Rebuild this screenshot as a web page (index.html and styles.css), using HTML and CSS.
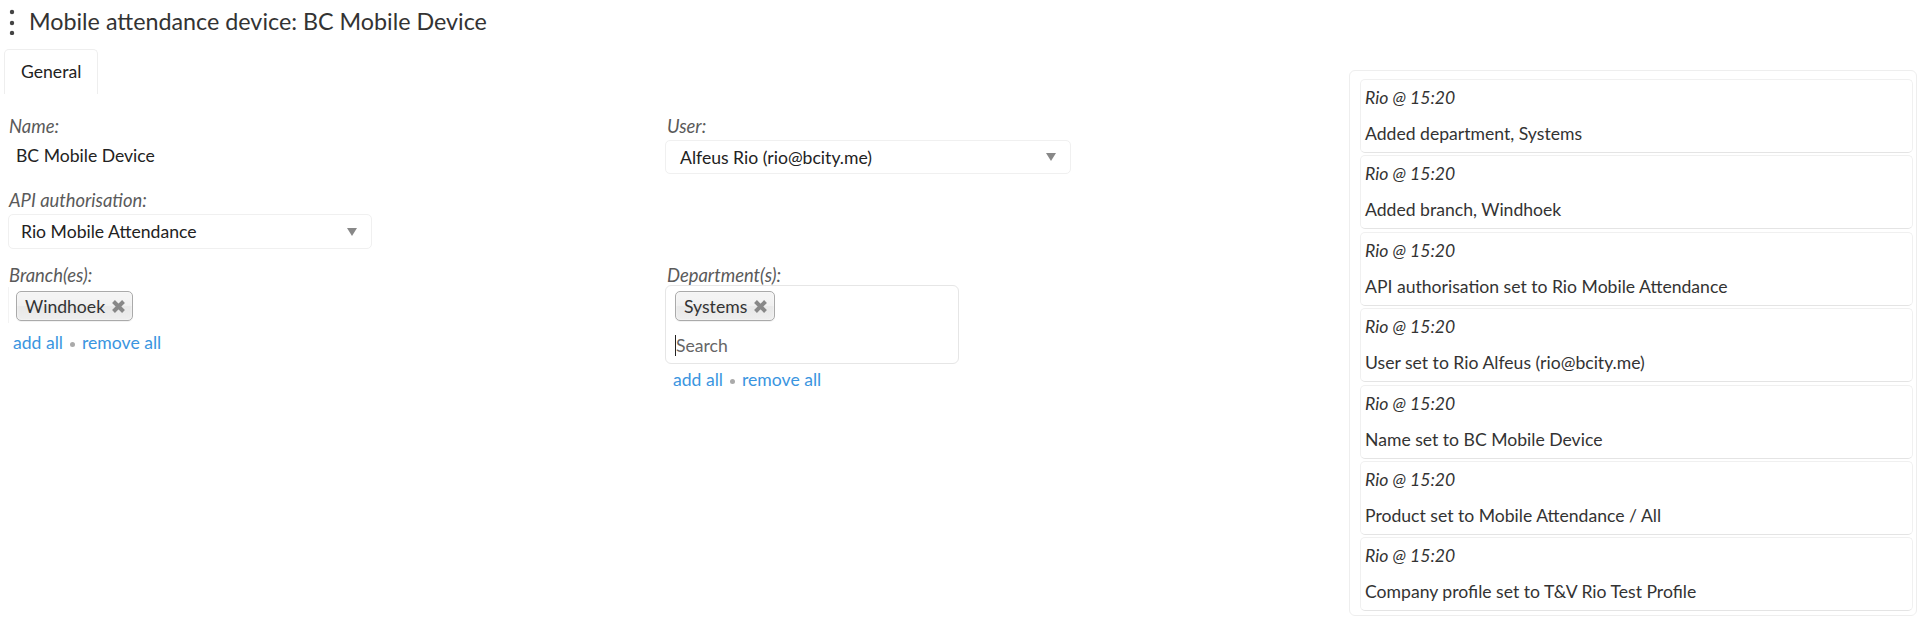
FILE: index.html
```html
<!DOCTYPE html>
<html lang="en">
<head>
  <meta charset="UTF-8" />
  <meta name="viewport" content="width=device-width, initial-scale=1.0" />
  <title>Mobile attendance device: BC Mobile Device</title>
  <link rel="stylesheet" href="styles.css">
</head>
<body>

  <header class="page-header">
    <svg class="menu-dots" width="8" height="26" viewBox="0 0 8 26">
      <circle cx="4" cy="3" r="2.2" />
      <circle cx="4" cy="14" r="2.2" />
      <circle cx="4" cy="24" r="2.2" />
    </svg>
    <h1>Mobile attendance device: BC Mobile Device</h1>
  </header>

  <div class="layout">
    <main class="main">
      <nav class="tabs">
        <span class="tab">General</span>
      </nav>

      <div class="form">
        <div class="field">
          <label>Name:</label>
          <div class="plain-value">BC Mobile Device</div>
        </div>

        <div class="field">
          <label>User:</label>
          <div class="select select-user">
            <span>Alfeus Rio (rio@bcity.me)</span>
            <svg class="caret" width="10" height="8" viewBox="0 0 10 8"><path d="M0 0 H10 L5 8 Z" /></svg>
          </div>
        </div>

        <div class="field">
          <label>API authorisation:</label>
          <div class="select select-api">
            <span>Rio Mobile Attendance</span>
            <svg class="caret" width="10" height="8" viewBox="0 0 10 8"><path d="M0 0 H10 L5 8 Z" /></svg>
          </div>
        </div>

        <div class="field"></div>

        <div class="field">
          <label>Branch(es):</label>
          <div class="multi multi-plain">
            <span class="tag">Windhoek
              <svg class="tag-close" width="15" height="15" viewBox="0 0 15 15"><path d="M2.5 2.5 L12.5 12.5 M12.5 2.5 L2.5 12.5" /></svg>
            </span>
          </div>
          <div class="bulk-links bulk-branch">
            <a href="#">add all</a><span class="sep"></span><a href="#">remove all</a>
          </div>
        </div>

        <div class="field">
          <label>Department(s):</label>
          <div class="multi multi-boxed">
            <span class="tag">Systems
              <svg class="tag-close" width="15" height="15" viewBox="0 0 15 15"><path d="M2.5 2.5 L12.5 12.5 M12.5 2.5 L2.5 12.5" /></svg>
            </span>
            <div class="search"><span class="search-text">Search</span></div>
          </div>
          <div class="bulk-links bulk-dept">
            <a href="#">add all</a><span class="sep"></span><a href="#">remove all</a>
          </div>
        </div>
      </div>
    </main>

    <aside class="history">
      <div class="history-item">
        <div class="history-meta">Rio @ 15:20</div>
        <div class="history-text">Added department, Systems</div>
      </div>
      <div class="history-item">
        <div class="history-meta">Rio @ 15:20</div>
        <div class="history-text">Added branch, Windhoek</div>
      </div>
      <div class="history-item">
        <div class="history-meta">Rio @ 15:20</div>
        <div class="history-text">API authorisation set to Rio Mobile Attendance</div>
      </div>
      <div class="history-item">
        <div class="history-meta">Rio @ 15:20</div>
        <div class="history-text">User set to Rio Alfeus (rio@bcity.me)</div>
      </div>
      <div class="history-item">
        <div class="history-meta">Rio @ 15:20</div>
        <div class="history-text">Name set to BC Mobile Device</div>
      </div>
      <div class="history-item">
        <div class="history-meta">Rio @ 15:20</div>
        <div class="history-text">Product set to Mobile Attendance / All</div>
      </div>
      <div class="history-item">
        <div class="history-meta">Rio @ 15:20</div>
        <div class="history-text">Company profile set to T&amp;V Rio Test Profile</div>
      </div>
    </aside>
  </div>

</body>
</html>
```

FILE: styles.css
```css
* {
  box-sizing: border-box;
}

body {
  margin: 0;
  font-family: Lato, 'Open Sans', sans-serif;
  font-size: 17.6px;
  color: #333;
  background: #fff;
}

/* header */

.page-header {
  display: flex;
  align-items: center;
  height: 42px;
  padding-left: 8px;
  gap: 13px;
}

.menu-dots {
  fill: #444;
  margin-top: 1px;
}

.page-header h1 {
  margin: 0;
  font-size: 23.3px;
  font-weight: 400;
  color: #333;
}

/* layout */

.layout {
  display: flex;
  align-items: flex-start;
}

.main {
  flex: 1;
}

/* tabs */

.tabs {
  margin-top: 7px;
  padding-left: 4px;
}

.tab {
  display: inline-block;
  height: 45px;
  line-height: 44px;
  padding: 0 16px;
  border: 1px solid #eee;
  border-bottom: none;
  border-radius: 5px 5px 0 0;
  color: #222;
}

/* form */

.form {
  display: grid;
  grid-template-columns: 658px 658px;
  padding: 20px 0 0 8px;
}

.field {
  margin-bottom: 14px;
}

.field label {
  display: block;
  font-size: 18.4px;
  line-height: 24px;
  font-style: italic;
  color: #5a5a5a;
  padding-left: 1px;
}

.plain-value {
  height: 36px;
  line-height: 36px;
  padding-left: 8px;
  color: #222;
}

.select {
  display: flex;
  align-items: center;
  justify-content: space-between;
  height: 35px;
  margin-top: 2px;
  padding: 0 14px 0 12px;
  border: 1px solid #f0f0f0;
  border-radius: 5px;
  color: #222;
}

.select-api {
  width: 364px;
}

.select-user {
  width: 406px;
  height: 34px;
  margin-left: -1px;
  padding-left: 14px;
}

.caret {
  fill: #888;
}

/* multi select */

.multi-plain {
  padding: 4px 0 2px 7px;
  border-left: 1px solid #f3f3f3;
}

.multi-boxed {
  width: 294px;
  margin: -2px 0 0 -1px;
  padding: 5px 9px 5px 9px;
  border: 1px solid #e6e6e6;
  border-radius: 6px;
}

.tag {
  display: inline-flex;
  align-items: center;
  gap: 6px;
  height: 30px;
  padding: 0 6px 0 8px;
  border: 1px solid #aaa;
  border-radius: 5px;
  background: linear-gradient(#f4f4f4 20%, #f0f0f0 50%, #e8e8e8 52%, #eee);
  box-shadow: 0 0 2px #fff inset, 0 1px 0 rgba(0, 0, 0, 0.05);
  color: #333;
}

.tag-close {
  stroke: #888;
  stroke-width: 4;
}

.search {
  height: 24px;
  line-height: 24px;
  margin-top: 13px;
}

.search-text {
  color: #666;
  border-left: 1px solid #222;
}

.bulk-links {
  display: flex;
  align-items: center;
  line-height: 20px;
  margin-top: 10px;
}

.bulk-branch {
  padding-left: 5px;
}

.bulk-dept {
  margin-top: 6px;
  padding-left: 7px;
}

.bulk-links a {
  color: #3a95e0;
  text-decoration: none;
}

.bulk-links .sep {
  display: inline-block;
  width: 5px;
  height: 5px;
  margin: 2px 7px 0;
  border-radius: 50%;
  background: #aaa;
}

/* history */

.history {
  width: 568px;
  margin: 28px 3px 0 0;
  padding: 8px 3px 4px 10px;
  border: 1px solid #eee;
  border-radius: 6px;
}

.history-item {
  padding: 0 4px;
  margin-bottom: 2.4px;
  border: 1px solid #f0f0f0;
  border-bottom-color: #e4e4e4;
  border-radius: 5px;
}

.history-item:last-child {
  margin-bottom: 0;
}

.history-meta {
  line-height: 36px;
  font-style: italic;
}

.history-text {
  line-height: 36px;
}
```
